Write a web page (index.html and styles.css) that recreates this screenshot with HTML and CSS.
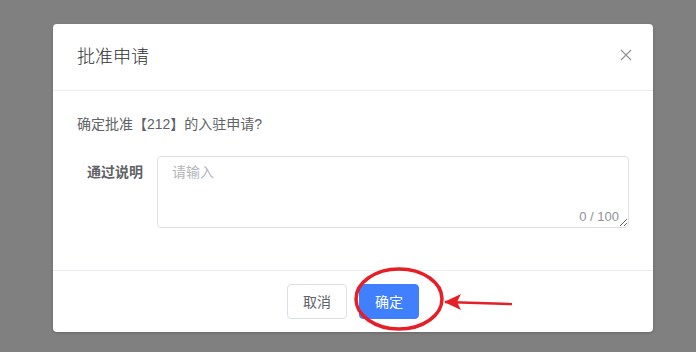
FILE: index.html
```html
<!DOCTYPE html>
<html lang="zh-CN">
<head>
    <meta charset="UTF-8">
    <meta name="viewport" content="width=device-width, initial-scale=1.0">
    <title>批准申请</title>
    <link rel="stylesheet" href="styles.css">
</head>
<body>

    <!-- Dialog -->
    <div class="dialog">
        <div class="dialog-header">
            <span class="dialog-title">批准申请</span>
            <span class="dialog-close">
                <svg width="12" height="12" viewBox="0 0 12 12">
                    <path d="M1 1 L11 11 M11 1 L1 11" stroke="#909399" stroke-width="1.2" fill="none"/>
                </svg>
            </span>
        </div>

        <div class="dialog-body">
            <p class="confirm-text">确定批准【212】的入驻申请?</p>
            <div class="form-item">
                <label class="form-label">通过说明</label>
                <div class="textarea-wrap">
                    <textarea placeholder="请输入"></textarea>
                    <span class="counter">0 / 100</span>
                </div>
            </div>
        </div>

        <div class="dialog-footer">
            <button class="btn">取消</button>
            <button class="btn btn-primary">确定</button>
        </div>

        <!-- Annotation -->
        <svg class="mark" width="180" height="80" viewBox="0 0 180 80">
            <ellipse cx="46" cy="35" rx="43" ry="30" fill="none" stroke="#e51f25" stroke-width="3.5"/>
            <path d="M92 38 L159 40" stroke="#e51f25" stroke-width="2.5" fill="none"/>
            <path d="M91 38 L108 30 L104 38 L108 46 Z" fill="#e51f25"/>
        </svg>
    </div>

</body>
</html>
```

FILE: styles.css
```css
body {
    margin: 0;
    background-color: #808080;
    font-family: "Liberation Sans", "Noto Sans CJK SC", sans-serif;
    height: 352px;
    overflow: hidden;
}

/* Dialog */
.dialog {
    position: relative;
    width: 600px;
    margin: 24px 0 0 53px;
    background-color: #fff;
    border-radius: 4px;
    box-shadow: 0 1px 3px rgba(0, 0, 0, 0.2);
}

.dialog-header {
    display: flex;
    justify-content: space-between;
    align-items: center;
    padding: 20px 21px 20px 24px;
    height: 26px;
    border-bottom: 1px solid #ebedf3;
}

.dialog-title {
    font-size: 18px;
    font-weight: 300;
    color: #303133;
    line-height: 26px;
}

.dialog-close {
    display: flex;
    margin-top: -4px;
}

.dialog-body {
    padding: 23px 24px 24px 24px;
}

.confirm-text {
    margin: 0 0 22px 0;
    font-size: 14px;
    line-height: 20px;
    color: #606266;
}

.form-item {
    display: flex;
    margin-bottom: 18px;
}

.form-label {
    width: 80px;
    padding-right: 14px;
    box-sizing: border-box;
    text-align: right;
    font-size: 14px;
    font-weight: bold;
    color: #606266;
    line-height: 32px;
}

.textarea-wrap {
    position: relative;
    flex: 1;
    display: flex;
}

.textarea-wrap textarea {
    flex: 1;
    height: 72px;
    box-sizing: border-box;
    padding: 5px 14px;
    border: 1px solid #dcdfe6;
    border-radius: 4px;
    font-family: "Liberation Sans", "Noto Sans CJK SC", sans-serif;
    font-size: 14px;
    line-height: 21px;
    color: #606266;
    outline: none;
}

.textarea-wrap textarea::placeholder {
    color: #b4b6bb;
}

.counter {
    position: absolute;
    right: 10px;
    bottom: 4px;
    font-size: 13px;
    color: #909399;
}

.dialog-footer {
    display: flex;
    justify-content: center;
    gap: 12px;
    padding: 13px 0 13px 0;
    border-top: 1px solid #ebedf3;
}

.btn {
    width: 60px;
    height: 35px;
    padding: 0 0 2px 0;
    border: 1px solid #dcdfe6;
    border-radius: 4px;
    background-color: #fff;
    font-family: "Liberation Sans", "Noto Sans CJK SC", sans-serif;
    font-size: 14px;
    color: #606266;
}

.btn-primary {
    background-color: #4080ff;
    border-color: #4080ff;
    color: #fff;
}

.mark {
    position: absolute;
    left: 300px;
    top: 240px;
}
```
